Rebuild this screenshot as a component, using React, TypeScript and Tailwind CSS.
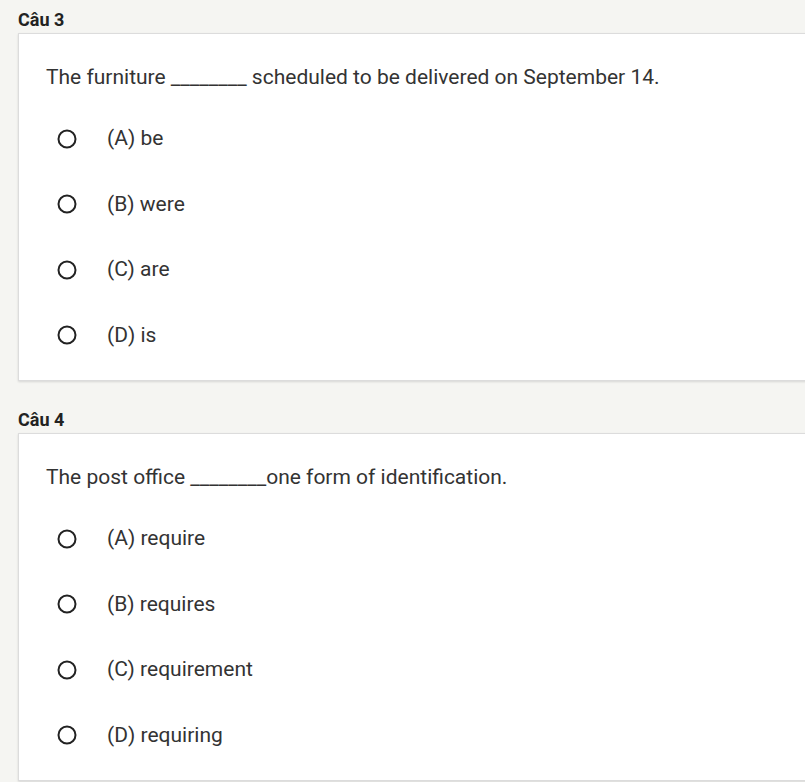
import React from 'react'

interface Question {
  id: number
  text: React.ReactNode
  options: string[]
}

const questions: Question[] = [
  {
    id: 3,
    text: 'The furniture ________ scheduled to be delivered on September 14.',
    options: ['(A) be', '(B) were', '(C) are', '(D) is'],
  },
  {
    id: 4,
    text: 'The post office ________one form of identification.',
    options: ['(A) require', '(B) requires', '(C) requirement', '(D) requiring'],
  },
]

function Radio() {
  return (
    <svg width="22" height="22" viewBox="0 0 22 22" className="shrink-0">
      <circle cx="11" cy="11" r="8.5" fill="none" stroke="#222" strokeWidth="2" />
    </svg>
  )
}

export default function App() {
  return (
    <div
      className="min-h-[782px] w-[805px] overflow-hidden bg-[#f5f5f2] pl-[18px] pt-[8px] text-[#333]"
      style={{ fontFamily: 'Roboto, "Noto Sans", sans-serif' }}
    >
      {questions.map((q, i) => (
        <div key={q.id} className={i > 0 ? 'mt-[27px]' : ''}>
          <div className="h-[24px] text-[18px] font-bold leading-[24px] text-[#222]">Câu {q.id}</div>
          <div className="mt-px w-[820px] border border-[#dcdcdc] bg-white pb-[12px] pl-[27px] pt-[29px] shadow-[0_1px_2px_rgba(0,0,0,0.12)]">
            <div className="h-[28px] text-[21px] leading-[28px]">{q.text}</div>
            <div className="mt-[15px]">
              {q.options.map((opt) => (
                <div key={opt} className="flex h-[65.5px] items-center pl-[10px]">
                  <Radio />
                  <span className="ml-[29px] text-[21px]">{opt}</span>
                </div>
              ))}
            </div>
          </div>
        </div>
      ))}
    </div>
  )
}
